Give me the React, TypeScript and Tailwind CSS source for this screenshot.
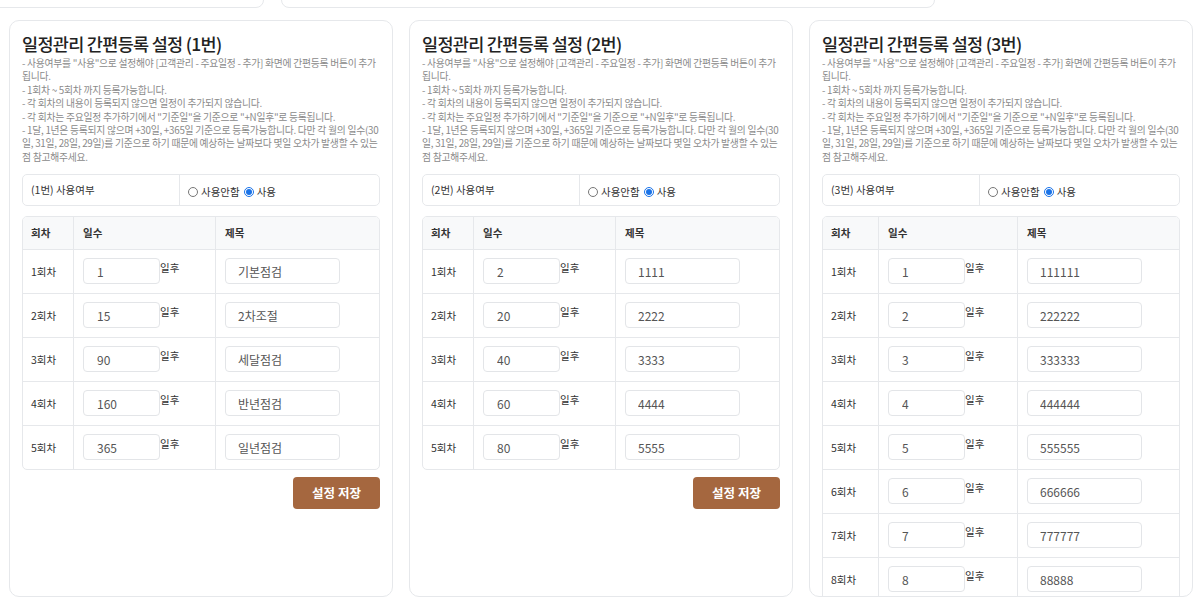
import React from "react";

type Row = { no: number; days: string; title: string };

type Setting = {
  id: number;
  rows: Row[];
  wide?: boolean;
};

const settings: Setting[] = [
  {
    id: 1,
    rows: [
      { no: 1, days: "1", title: "기본점검" },
      { no: 2, days: "15", title: "2차조절" },
      { no: 3, days: "90", title: "세달점검" },
      { no: 4, days: "160", title: "반년점검" },
      { no: 5, days: "365", title: "일년점검" },
    ],
  },
  {
    id: 2,
    rows: [
      { no: 1, days: "2", title: "1111" },
      { no: 2, days: "20", title: "2222" },
      { no: 3, days: "40", title: "3333" },
      { no: 4, days: "60", title: "4444" },
      { no: 5, days: "80", title: "5555" },
    ],
  },
  {
    id: 3,
    wide: true,
    rows: [
      { no: 1, days: "1", title: "111111" },
      { no: 2, days: "2", title: "222222" },
      { no: 3, days: "3", title: "333333" },
      { no: 4, days: "4", title: "444444" },
      { no: 5, days: "5", title: "555555" },
      { no: 6, days: "6", title: "666666" },
      { no: 7, days: "7", title: "777777" },
      { no: 8, days: "8", title: "88888" },
    ],
  },
];

// 안내 문구
const notices = [
  '- 사용여부를 "사용"으로 설정해야 [고객관리 - 주요일정 - 추가] 화면에 간편등록 버튼이 추가됩니다.',
  "- 1회차 ~ 5회차 까지 등록가능합니다.",
  "- 각 회차의 내용이 등록되지 않으면 일정이 추가되지 않습니다.",
  '- 각 회차는 주요일정 추가하기에서 "기준일"을 기준으로 "+N일후"로 등록됩니다.',
  "- 1달, 1년은 등록되지 않으며 +30일, +365일 기준으로 등록가능합니다. 다만 각 월의 일수(30일, 31일, 28일, 29일)를 기준으로 하기 때문에 예상하는 날짜보다 몇일 오차가 발생할 수 있는 점 참고해주세요.",
];

const SettingCard = ({ setting }: { setting: Setting }) => {
  const showSave = setting.rows.length <= 5;
  // 3번은 회차 칸이 조금 더 넓음
  const noCol = setting.wide ? "w-[56px]" : "w-[51px]";
  const dayCol = setting.wide ? "w-[139px]" : "w-[142px]";

  return (
    <div className="w-[384px] h-[577px] shrink-0 border border-[#e6e8eb] rounded-[10px] overflow-hidden px-[12px] pt-[11px] bg-white">
      {/* 제목 */}
      <h2 className="text-[17.5px] leading-[24px] font-medium tracking-[-0.7px] text-[#222]">
        일정관리 간편등록 설정 ({setting.id}번)
      </h2>

      {/* 안내 */}
      <div className="mt-[1px] text-[9.8px] leading-[13.4px] tracking-[-0.26px] text-[#8a8a8a] break-all">
        {notices.map((n, i) => (
          <p key={i}>{n}</p>
        ))}
      </div>

      {/* 사용여부 */}
      <div className="mt-[10px] flex h-[32px] border border-[#e6e8eb] rounded-[5px] text-[10.5px] text-[#333]">
        <div className="w-[157px] border-r border-[#e6e8eb] pl-[8px] pt-[7px]">({setting.id}번) 사용여부</div>
        <div className="flex items-center gap-[3px] pl-[8px] pt-[3px]">
          <input type="radio" name={`use-${setting.id}`} className="m-0 w-[10px] h-[10px]" />
          <span>사용안함</span>
          <input
            type="radio"
            name={`use-${setting.id}`}
            defaultChecked
            className="m-0 ml-[1px] w-[10px] h-[10px] accent-[#1a73e8]"
          />
          <span>사용</span>
        </div>
      </div>

      {/* 회차 테이블 */}
      <div className="mt-[10px] border border-[#e6e8eb] rounded-[5px] overflow-hidden text-[10.5px] text-[#333]">
        <div className="flex h-[32px] bg-[#f8f9fa] font-bold items-center">
          <div className={`${noCol} pl-[8px] h-full flex items-center border-r border-[#e6e8eb]`}>회차</div>
          <div className={`${dayCol} pl-[9px] h-full flex items-center border-r border-[#e6e8eb]`}>일수</div>
          <div className="flex-1 pl-[9px]">제목</div>
        </div>
        {setting.rows.map((r) => (
          <div key={r.no} className="flex h-[44px] border-t border-[#e6e8eb]">
            <div className={`${noCol} pl-[8px] flex items-center border-r border-[#e6e8eb]`}>{r.no}회차</div>
            <div className={`${dayCol} pl-[9px] pt-[8px] flex items-start border-r border-[#e6e8eb]`}>
              <input
                defaultValue={r.days}
                className="w-[77px] h-[26px] border border-[#e3e5e8] rounded-[4px] pl-[13px] text-[12px] text-[#555] outline-none"
              />
              <span className="pt-[2px] text-[10.5px]">일후</span>
            </div>
            <div className="flex-1 pl-[9px] pt-[8px]">
              <input
                defaultValue={r.title}
                className="w-[115px] h-[26px] border border-[#e3e5e8] rounded-[4px] pl-[12px] text-[12px] text-[#555] outline-none"
              />
            </div>
          </div>
        ))}
      </div>

      {showSave && (
        <div className="flex justify-end mt-[7px]">
          <button className="w-[87px] h-[32px] rounded-[4px] bg-[#a5673f] text-white text-[12.5px] font-bold">
            설정 저장
          </button>
        </div>
      )}
    </div>
  );
};

export default function App() {
  return (
    <div className="w-[1200px] h-[612px] overflow-hidden bg-white font-['Noto_Sans_CJK_KR',sans-serif]">
      {/* 상단 카드 (잘린 부분) */}
      <div className="flex items-end gap-[17px] h-[8px] -ml-[10px]">
        <div className="w-[274px] h-[40px] shrink-0 border border-[#e6e8eb] rounded-[8px]" />
        <div className="w-[654px] h-[40px] shrink-0 border border-[#e6e8eb] rounded-[8px]" />
      </div>

      <div className="mt-[12px] flex gap-[16px] pl-[9px]">
        {settings.map((s) => (
          <SettingCard key={s.id} setting={s} />
        ))}
      </div>
    </div>
  );
}
